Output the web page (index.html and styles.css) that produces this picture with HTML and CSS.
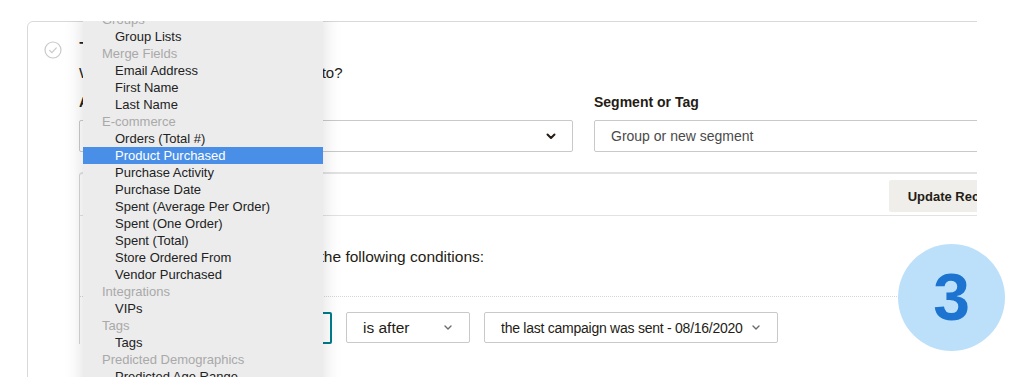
FILE: index.html
```html
<!DOCTYPE html>
<html lang="en">
  <head>
    <meta charset="UTF-8" />
    <meta name="viewport" content="width=device-width, initial-scale=1.0" />
    <title>Campaign Recipients</title>
    <link rel="stylesheet" href="styles.css">
  </head>
  <body>
    <div class="frame">
      <div class="card">
        <svg class="check" width="18" height="18" viewBox="0 0 18 18">
          <circle cx="9" cy="9" r="8" fill="none" stroke="#c9c9c9" stroke-width="1.2" />
          <path d="M5.6 9.3l2.3 2.3 4.4-4.7" fill="none" stroke="#c9c9c9" stroke-width="1.2" stroke-linecap="round" stroke-linejoin="round" />
        </svg>
        <div class="card-body">
          <h2 class="title">To</h2>
          <p class="subtitle">Who are you sending this campaign to?</p>
          <div class="fields">
            <div class="field">
              <label class="label">Audience</label>
              <div class="select">
                <span>Online Store Customers</span>
                <svg class="chev chev-dark" width="10" height="7" viewBox="0 0 10 7"><path d="M1.5 1.5l3.5 3.5 3.5-3.5" /></svg>
              </div>
            </div>
            <div class="field">
              <label class="label">Segment or Tag</label>
              <div class="select placeholder">Group or new segment</div>
            </div>
          </div>

          <div class="panel">
            <div class="panel-head">
              <button class="button">Update Recipient Count</button>
            </div>
            <div class="panel-body">
              <p class="match">
                Contacts match
                <span class="inline-select">all</span>
                of the following conditions:
              </p>
              <div class="rule"></div>
              <div class="conditions">
                <div class="select select-active">Date Added</div>
                <div class="select select-op">
                  <span>is after</span>
                  <svg class="chev" width="10" height="7" viewBox="0 0 10 7"><path d="M2 2l3 3 3-3" /></svg>
                </div>
                <div class="select select-value">
                  <span>the last campaign was sent - 08/16/2020</span>
                  <svg class="chev" width="10" height="7" viewBox="0 0 10 7"><path d="M2 2l3 3 3-3" /></svg>
                </div>
              </div>
            </div>
          </div>
        </div>
      </div>

      <ul class="menu">
        <li class="group">Groups</li>
        <li>Group Lists</li>
        <li class="group">Merge Fields</li>
        <li>Email Address</li>
        <li>First Name</li>
        <li>Last Name</li>
        <li class="group">E-commerce</li>
        <li>Orders (Total #)</li>
        <li class="selected">Product Purchased</li>
        <li>Purchase Activity</li>
        <li>Purchase Date</li>
        <li>Spent (Average Per Order)</li>
        <li>Spent (One Order)</li>
        <li>Spent (Total)</li>
        <li>Store Ordered From</li>
        <li>Vendor Purchased</li>
        <li class="group">Integrations</li>
        <li>VIPs</li>
        <li class="group">Tags</li>
        <li>Tags</li>
        <li class="group">Predicted Demographics</li>
        <li>Predicted Age Range</li>
        <li>Predicted Gender</li>
      </ul>
    </div>

    <div class="step">3</div>
  </body>
</html>
```

FILE: styles.css
```css
body {
  font-family: "Liberation Sans", Arial, sans-serif;
  background-color: #ffffff;
  color: #241c15;
  margin: 0;
  padding: 0;
}
.frame {
  position: relative;
  width: 950px;
  height: 356px;
  margin: 21px 0 0 27px;
  overflow: hidden;
}
.card {
  display: flex;
  gap: 17px;
  width: 1120px;
  height: 420px;
  padding: 15px 0 0 16px;
  border: 1px solid #d9d9d9;
  border-radius: 6px;
  box-sizing: border-box;
}
.check {
  flex-shrink: 0;
  margin-top: 4px;
}
.title {
  margin: 0;
  font-size: 22px;
  font-weight: normal;
  line-height: 26px;
}
.subtitle {
  margin: 0;
  font-size: 15px;
  line-height: 20px;
}
.fields {
  display: flex;
  gap: 21px;
  margin-top: 9px;
}
.field {
  width: 494px;
}
.label {
  display: block;
  font-size: 14px;
  font-weight: bold;
  line-height: 20px;
  margin-bottom: 8px;
}
.select {
  display: flex;
  align-items: center;
  justify-content: space-between;
  height: 32px;
  padding: 0 16px;
  border: 1px solid #c9c9c9;
  border-radius: 2px;
  box-sizing: border-box;
  font-size: 14px;
  color: #241c15;
  white-space: nowrap;
}
.placeholder {
  color: #4a4a4a;
}
.chev {
  flex-shrink: 0;
  fill: none;
  stroke: #6b6b6b;
  stroke-width: 1.4;
  stroke-linecap: round;
  stroke-linejoin: round;
}
.chev-dark {
  stroke: #241c15;
  stroke-width: 2;
}
.panel {
  width: 1009px;
  margin-top: 20px;
  border-top: 2px solid #e2e2e2;
  border-left: 1px solid #d4d4d4;
  border-top-left-radius: 4px;
}
.panel-head {
  display: flex;
  justify-content: flex-end;
  padding: 6px 15px 3px 0;
  border-bottom: 1px solid #e2e2e2;
}
.button {
  height: 32px;
  padding: 0 19px;
  border: none;
  border-radius: 2px;
  background-color: #efeeea;
  font-family: inherit;
  font-size: 13px;
  font-weight: bold;
  color: #241c15;
}
.panel-body {
  padding-top: 31px;
}
.match {
  margin: 0 0 0 17px;
  font-size: 15.5px;
  line-height: 20px;
}
.inline-select {
  display: inline-block;
  width: 89px;
  border-bottom: 1px solid #c9c9c9;
}
.rule {
  margin-top: 28px;
  border-top: 1px dotted #d6d6d6;
}
.conditions {
  display: flex;
  gap: 14px;
  margin: 15px 0 0 15px;
}
.select-active {
  width: 237px;
  border: 2px solid #007c89;
}
.select-op {
  width: 124px;
  height: 31px;
  font-size: 15.5px;
}
.select-value {
  width: 294px;
  height: 31px;
  font-size: 14px;
  letter-spacing: -0.25px;
}
.menu {
  position: absolute;
  top: -10px;
  left: 56px;
  width: 240px;
  margin: 0;
  padding: 0;
  list-style: none;
  background-color: #ececec;
  box-shadow: 0 0 18px rgba(0, 0, 0, 0.14);
  font-size: 13px;
  color: #222222;
}
.menu li {
  height: 17px;
  line-height: 17px;
  padding-left: 32px;
}
.menu .group {
  padding-left: 19px;
  color: #a9a9a9;
}
.menu .selected {
  background-color: #4a8fe7;
  color: #ffffff;
}
.step {
  position: absolute;
  top: 244px;
  left: 898px;
  width: 107px;
  height: 107px;
  border-radius: 50%;
  background-color: #bde0fa;
  color: #1c74d0;
  font-size: 66px;
  font-weight: bold;
  line-height: 107px;
  text-align: center;
}
```
